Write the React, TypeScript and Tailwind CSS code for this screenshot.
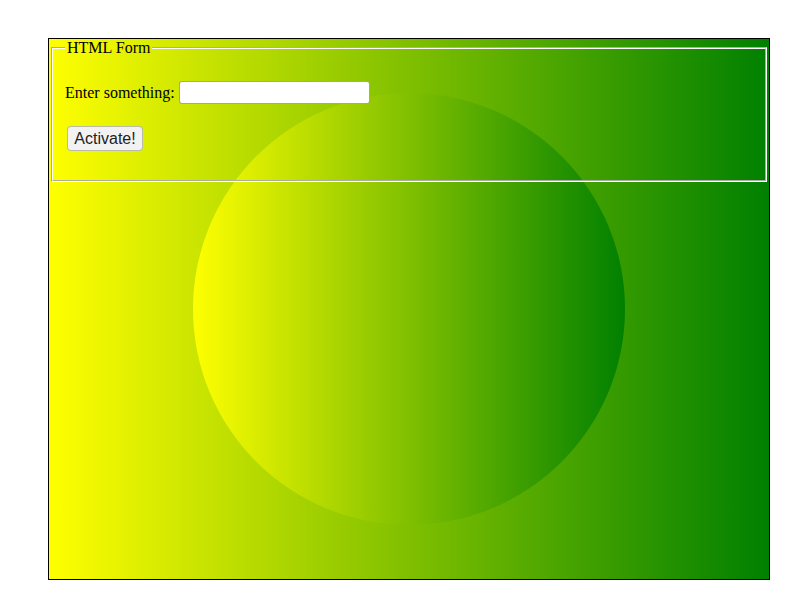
import React from "react";

export default function App() {
  return (
    <div className="w-[800px] h-[600px] bg-white pt-[38px] pl-[48px]">
      <div className="relative w-[722px] h-[542px] border border-black bg-[linear-gradient(to_right,#ffff00,#008000)]">
        <div className="absolute left-[144px] top-[54px] w-[432px] h-[432px] rounded-full bg-[linear-gradient(to_right,#ffff00,#008000)]" />
        <fieldset className="relative mx-[2px] border-2 [border-style:groove] border-white px-[12px] pb-[29px] font-['Liberation_Serif',serif] text-[16px] text-black">
          <legend className="px-[2px] leading-[18px]">HTML Form</legend>
          <div className="mt-[24px] flex items-center h-[23px]">
            <span className="leading-[18px]">Enter something:</span>
            <input
              type="text"
              className="ml-[4px] w-[191px] h-[23px] bg-white border border-[rgba(40,70,0,0.45)] rounded-[3px] px-[2px] outline-none"
            />
          </div>
          <div className="mt-[22px] flex h-[25px] pl-[2px]">
            <button className="w-[76px] h-[25px] bg-[#f2f2f2] border border-[rgba(60,60,0,0.3)] rounded-[4px] font-['Liberation_Sans',Arial,sans-serif] text-[16px] text-[#222] leading-none">
              Activate!
            </button>
          </div>
        </fieldset>
      </div>
    </div>
  );
}
